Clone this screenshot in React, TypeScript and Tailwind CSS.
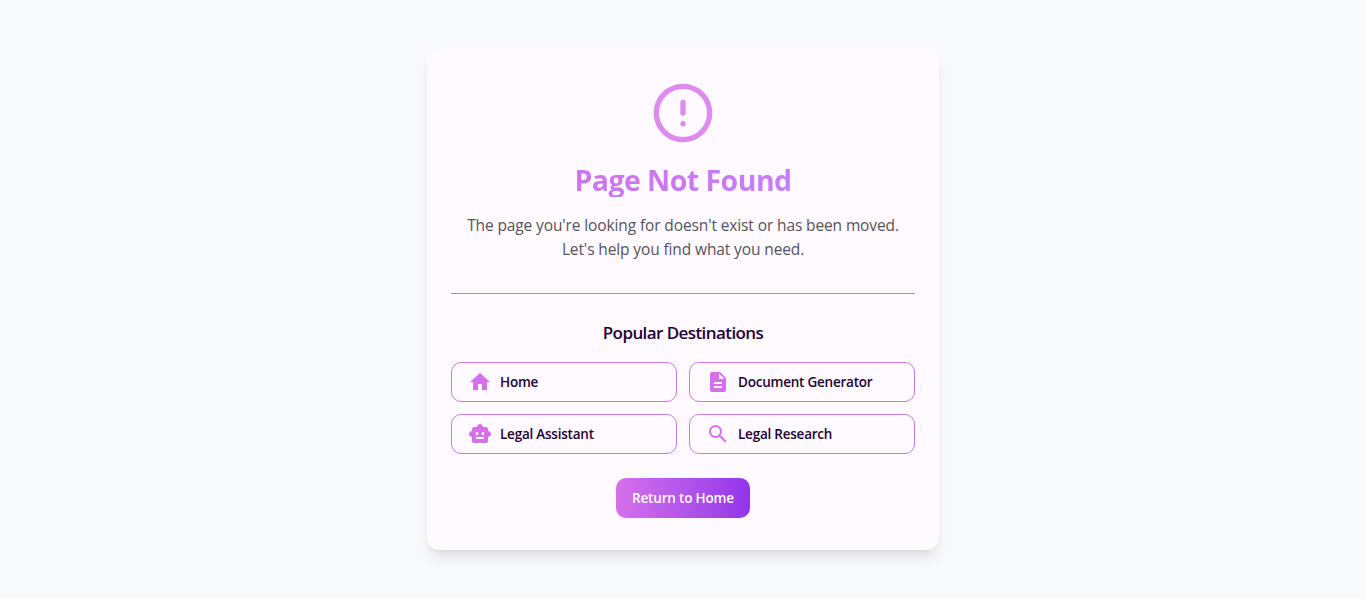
import type { ReactNode } from "react";
import { CircleAlert } from "lucide-react";
import { MdDescription, MdHome, MdSearch, MdSmartToy } from "react-icons/md";

type Destination = { label: string; icon: ReactNode };

const destinations: Destination[] = [
  { label: "Home", icon: <MdHome size={24} /> },
  { label: "Document Generator", icon: <MdDescription size={24} /> },
  { label: "Legal Assistant", icon: <MdSmartToy size={24} /> },
  { label: "Legal Research", icon: <MdSearch size={24} /> },
];

function DestinationButton({ label, icon }: Destination) {
  return (
    <button className="flex h-10 items-center gap-2 rounded-[10px] border border-[#c77ddb] px-4 text-[13.5px] font-semibold tracking-[-0.23px] text-[#240037]">
      <span className="text-[#d570ea]">{icon}</span>
      <span className="pt-px whitespace-nowrap">{label}</span>
    </button>
  );
}

export default function App() {
  return (
    <main className="flex h-[599px] items-center justify-center bg-[#f9fafb] font-['Open_Sans','Noto_Sans',sans-serif]">
      <section className="flex w-[512px] flex-col items-center rounded-xl bg-[#fefaff] px-6 py-8 shadow-lg">
        <CircleAlert className="size-16 text-[#d570ea] opacity-80" />
        <h1 className="mt-4 w-full bg-linear-to-r from-[#d46ee9] to-[#c084fc] bg-clip-text pt-0.5 text-center text-[28.5px] leading-[34px] font-bold tracking-[-0.55px] text-transparent">
          Page Not Found
        </h1>
        <p className="mt-4 text-center text-[15.5px] leading-6 tracking-[-0.12px] text-[#57535a]">
          The page you're looking for doesn't exist or has been moved.
          <br />
          Let's help you find what you need.
        </p>
        <hr className="mt-8 w-full border-[#c77ddb]" />
        <h2 className="mt-6 pt-0.5 text-[17px] leading-[26px] font-semibold tracking-[-0.58px] text-[#240037]">Popular Destinations</h2>
        <div className="mt-4 grid w-full grid-cols-2 gap-3">
          {destinations.map((d) => (
            <DestinationButton key={d.label} {...d} />
          ))}
        </div>
        <button className="mt-6 h-10 w-[134px] rounded-[10px] bg-linear-to-r from-[#d570ea] to-[#9333ea] pt-px text-[13.5px] font-semibold tracking-[-0.18px] whitespace-nowrap text-[#fefaff]">
          Return to Home
        </button>
      </section>
    </main>
  );
}
